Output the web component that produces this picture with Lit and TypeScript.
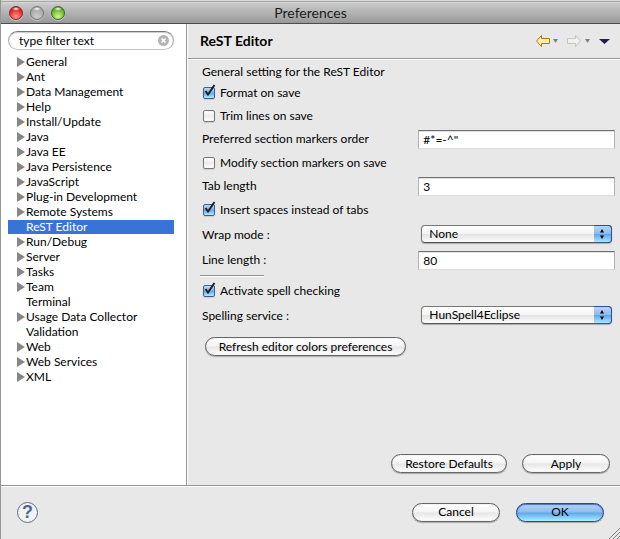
import { LitElement, html, css, svg } from "lit";
import { customElement, state } from "lit/decorators.js";
import { classMap } from "lit/directives/class-map.js";

interface Item {
  name: string;
  leaf?: boolean;
}

const ITEMS: Item[] = [
  { name: "General" },
  { name: "Ant" },
  { name: "Data Management" },
  { name: "Help" },
  { name: "Install/Update" },
  { name: "Java" },
  { name: "Java EE" },
  { name: "Java Persistence" },
  { name: "JavaScript" },
  { name: "Plug-in Development" },
  { name: "Remote Systems" },
  { name: "ReST Editor", leaf: true },
  { name: "Run/Debug" },
  { name: "Server" },
  { name: "Tasks" },
  { name: "Team" },
  { name: "Terminal", leaf: true },
  { name: "Usage Data Collector" },
  { name: "Validation", leaf: true },
  { name: "Web" },
  { name: "Web Services" },
  { name: "XML" },
];

const arrow = svg`<path d="M1.5 7 L6.5 1.5 V4.5 H14.5 V9.5 H6.5 V12.5 Z" />`;

@customElement("app-root")
export class AppRoot extends LitElement {
  static styles = css`
    :host {
      display: flex;
      flex-direction: column;
      min-height: 100vh;
      box-sizing: border-box;
      border-left: 1px solid #959595;
      background: #e8e8e8;
      color: #000;
      font: 12px/15px Lato, "Noto Sans", sans-serif;
    }
    * {
      box-sizing: border-box;
    }
    svg {
      display: block;
    }
    button,
    input,
    select {
      margin: 0;
      color: inherit;
      font: inherit;
    }
    .titlebar {
      display: grid;
      grid-template-columns: 1fr auto 1fr;
      align-items: center;
      height: 24px;
      border-top: 1px solid #d8d8d8;
      border-bottom: 1px solid #4c4c4c;
      background: linear-gradient(#a8a8a8 1px, #d8d8d8 1px, #c8c8c8 3px, #989898);
    }
    .titlebar h1 {
      margin: 0;
      font-size: 14px;
      font-weight: 400;
      color: #1c1c1c;
    }
    .lights {
      display: flex;
      gap: 7px;
      padding: 2px 0 0 8px;
    }
    .light {
      width: 14px;
      height: 14px;
      padding: 0;
      border: 1px solid #777;
      border-radius: 50%;
      background: radial-gradient(ellipse 4px 2px at 50% 15%, #fff, transparent),
        radial-gradient(circle at 50% 80%, #ccc, #aaa 65%, #888);
      box-shadow: 0 1px 0 #c8c8c8;
    }
    .close {
      border-color: #84302c;
      background: radial-gradient(ellipse 4px 2px at 50% 15%, #fff, transparent),
        radial-gradient(circle at 50% 80%, #ff9a90, #ee2828 60%, #8c0808);
    }
    .zoom {
      border-color: #3f6828;
      background: radial-gradient(ellipse 4px 2px at 50% 15%, #fff, transparent),
        radial-gradient(circle at 50% 80%, #d4f88c, #6cb834 60%, #2c6810);
    }
    .body {
      display: grid;
      grid-template-columns: minmax(186px, 30%) 1fr;
      flex: 1;
    }
    .side {
      padding: 7px 12px 7px 7px;
      border-right: 1px solid #959595;
      background: #fff;
    }
    .search {
      display: flex;
      align-items: center;
      height: 19px;
      padding: 0 4px 0 10px;
      border: 1px solid #aaa;
      border-top-color: #777;
      border-bottom-color: #c4c4c4;
      border-radius: 10px;
      background: #fff;
      box-shadow: inset 0 1px 1px #ccc;
    }
    .search input {
      flex: 1;
      min-width: 0;
      padding: 0;
      border: 0;
      outline: 0;
      background: none;
    }
    .search button {
      padding: 0;
      border: 0;
      background: none;
    }
    .tree {
      margin: 5px 0 0;
      padding: 0;
      list-style: none;
    }
    .tree li {
      display: flex;
      align-items: center;
      height: 15px;
      padding: 0 0 2px 9px;
    }
    .tree svg {
      width: 9px;
      flex: none;
      fill: #868686;
    }
    .leaf svg {
      visibility: hidden;
    }
    .tree .selected {
      background: linear-gradient(#3874d8, #3874d8) 0 0 / 100% 14px no-repeat;
      color: #fff;
    }
    .page {
      display: flex;
      flex-direction: column;
      border-left: 1px solid #fff;
    }
    .head {
      display: flex;
      align-items: center;
      justify-content: space-between;
      height: 35px;
      padding: 0 10px 0 12px;
      border-bottom: 1px solid #959595;
      box-shadow: 0 1px 0 #fff;
    }
    .head h2 {
      margin: 0;
      padding-bottom: 2px;
      font-size: 14px;
      font-weight: 700;
    }
    .nav {
      display: flex;
      align-items: center;
    }
    .nav button {
      display: flex;
      align-items: center;
      gap: 3px;
      height: 16px;
      padding: 0;
      margin-left: 9px;
      border: 0;
      background: none;
    }
    .back {
      fill: #fff0b0;
      stroke: #b87800;
    }
    .forward {
      fill: #f0f0ec;
      stroke: #c4c4c0;
    }
    .drop {
      fill: #808080;
    }
    .menu {
      fill: #201c50;
    }
    form {
      display: flex;
      flex: 1;
      flex-direction: column;
      gap: 5px;
      padding: 6px 5px 0 14px;
    }
    form p {
      margin: 0;
      line-height: 14px;
    }
    .check {
      display: flex;
      align-items: center;
      align-self: flex-start;
      gap: 5px;
      height: 18px;
    }
    .check-text {
      padding-bottom: 2px;
    }
    .box {
      position: relative;
      width: 13px;
      height: 12px;
      padding-left: 1px;
    }
    .box input {
      display: block;
      width: 12px;
      height: 12px;
      appearance: none;
      border: 1px solid #777;
      border-radius: 2px;
      background: linear-gradient(#fff, #ececec 50%, #fff);
      box-shadow: 0 1px 1px #ccc;
    }
    .box input:checked {
      border-color: #405c94;
      background: linear-gradient(#c0dcf8, #68acf0 55%, #b0f0ff);
    }
    .box svg {
      position: absolute;
      left: 1px;
      bottom: 1px;
      display: none;
      fill: none;
      stroke: #222;
      stroke-width: 2;
      pointer-events: none;
    }
    .box input:checked + svg {
      display: block;
    }
    .field {
      display: grid;
      grid-template-columns: 11fr 10fr;
      align-items: center;
      min-height: 19px;
    }
    .field label {
      padding-bottom: 2px;
    }
    .field input {
      width: 100%;
      height: 19px;
      padding: 0 4px 1px;
      border: 1px solid #b4b4b4;
      border-top-color: #707070;
      border-bottom-color: #dcdcdc;
      outline: 0;
      background: #fff;
      box-shadow: inset 0 1px 0 #e0e0e0;
    }
    .choice {
      min-height: 22px;
    }
    .pop {
      position: relative;
      margin: 0 3px 2px;
    }
    .pop select {
      display: block;
      width: 100%;
      height: 18px;
      padding: 0 24px 1px 7px;
      appearance: none;
      border: 1px solid #777;
      border-bottom-color: #555;
      border-radius: 4px;
      background: linear-gradient(#fff, #f4f4f4 48%, #e4e4e4 52%, #fcfcfc);
      box-shadow: 0 1px 1px #aaa;
    }
    .pop span {
      position: absolute;
      top: 0;
      right: 0;
      display: grid;
      place-items: center;
      width: 18px;
      height: 18px;
      border: 1px solid #2c4cac;
      border-left: 0;
      border-bottom-color: #3c5880;
      border-radius: 0 4px 4px 0;
      background: linear-gradient(#b8d4f4, #8cbcf0 48%, #60a4e8 52%, #a8e8ff);
      pointer-events: none;
    }
    .rule {
      width: 64px;
      height: 2px;
      margin: 0 0 0 -2px;
      border: 0;
      border-top: 1px solid #959595;
      border-bottom: 1px solid #fff;
    }
    .push {
      height: 19px;
      min-width: 88px;
      padding: 0 12px 1px;
      border: 1px solid #666;
      border-radius: 10px;
      background: linear-gradient(#fff, #f4f4f4 48%, #e6e6e6 52%, #fff);
      box-shadow: 0 1px 1px #aaa, inset 0 0 1px #999;
      line-height: 15px;
      white-space: nowrap;
    }
    .primary {
      border-color: #2c4880;
      background: linear-gradient(#b8d4f4, #8cbcf0 48%, #60a4e8 52%, #a8f0ff);
      box-shadow: 0 1px 1px #aaa, inset 0 1px 1px #4870c0;
    }
    .refresh {
      align-self: flex-start;
      width: 201px;
      margin: 5px 0 0 3px;
    }
    .actions {
      display: flex;
      justify-content: flex-end;
      gap: 15px;
      margin-top: auto;
      padding: 0 5px 12px 0;
    }
    .restore {
      width: 116px;
    }
    .foot {
      position: relative;
      display: flex;
      align-items: center;
      gap: 16px;
      height: 54px;
      padding: 0 16px 1px;
      border-top: 1px solid #959595;
      box-shadow: inset 0 1px 0 #fff;
    }
    .help {
      width: 21px;
      height: 21px;
      margin-right: auto;
      padding: 0;
      border: 1px solid #5a708c;
      border-radius: 50%;
      background: #f0f2f4;
      color: #50688c;
      font: 700 18px/18px "Liberation Sans", sans-serif;
    }
    .grip {
      position: absolute;
      right: 0;
      bottom: 0;
      stroke: #808080;
    }
  `;

  @state() private selected = "ReST Editor";

  private check(label: string, on = false) {
    return html`<label class="check">
      <span class="box">
        <input type="checkbox" .checked=${on} />
        <svg width="13" height="14" viewBox="0 0 13 14"><path d="M2.5 7 L5 10.5 L11.5 1" /></svg>
      </span>
      <span class="check-text">${label}</span>
    </label>`;
  }

  private field(id: string, label: string, value: string) {
    return html`<div class="field">
      <label for=${id}>${label}</label><input id=${id} type="text" .value=${value} />
    </div>`;
  }

  private choice(id: string, label: string, value: string) {
    return html`<div class="field choice">
      <label for=${id}>${label}</label>
      <div class="pop">
        <select id=${id}><option>${value}</option></select>
        <span>
          <svg width="6" height="12" viewBox="0 0 6 12">
            <path d="M3 1 L5 4.5 H1 Z M3 11 L5 7.5 H1 Z" />
          </svg>
        </span>
      </div>
    </div>`;
  }

  private drop() {
    return html`<svg class="drop" width="5" height="4" viewBox="0 0 5 4"><path d="M0 0 H5 L2.5 4 Z" /></svg>`;
  }

  render() {
    return html`
      <header class="titlebar">
        <div class="lights">
          <button class="light close" aria-label="Close"></button>
          <button class="light" aria-label="Minimize"></button>
          <button class="light zoom" aria-label="Zoom"></button>
        </div>
        <h1>Preferences</h1>
      </header>
      <div class="body">
        <nav class="side">
          <div class="search">
            <input type="text" aria-label="Filter" value="type filter text" />
            <button aria-label="Clear">
              <svg width="11" height="11" viewBox="0 0 11 11">
                <circle cx="5.5" cy="5.5" r="5.5" fill="#b4b4b4" />
                <path d="M3.5 3.5 L7.5 7.5 M7.5 3.5 L3.5 7.5" stroke="#fff" stroke-width="1.6" />
              </svg>
            </button>
          </div>
          <ul class="tree">
            ${ITEMS.map(
              (item) => html`<li
                class=${classMap({ leaf: !!item.leaf, selected: item.name === this.selected })}
                @click=${() => (this.selected = item.name)}
              >
                <svg width="9" height="10" viewBox="0 0 9 10"><path d="M0 0 L8 5 L0 10 Z" /></svg>
                ${item.name}
              </li>`
            )}
          </ul>
        </nav>
        <main class="page">
          <div class="head">
            <h2>ReST Editor</h2>
            <div class="nav">
              <button aria-label="Back">
                <svg class="back" width="15" height="14" viewBox="0 0 15 14">${arrow}</svg>
                ${this.drop()}
              </button>
              <button aria-label="Forward">
                <svg class="forward" width="15" height="14" viewBox="0 0 15 14">
                  <g transform="matrix(-1 0 0 1 15 0)">${arrow}</g>
                </svg>
                ${this.drop()}
              </button>
              <button aria-label="Menu">
                <svg class="menu" width="11" height="5" viewBox="0 0 11 5"><path d="M0 0 H11 L5.5 5 Z" /></svg>
              </button>
            </div>
          </div>
          <form @submit=${(e: Event) => e.preventDefault()}>
            <p>General setting for the ReST Editor</p>
            ${this.check("Format on save", true)} ${this.check("Trim lines on save")}
            ${this.field("order", "Preferred section markers order", '#*=-^"')}
            ${this.check("Modify section markers on save")} ${this.field("tab", "Tab length", "3")}
            ${this.check("Insert spaces instead of tabs", true)} ${this.choice("wrap", "Wrap mode :", "None")}
            ${this.field("line", "Line length :", "80")}
            <hr class="rule" />
            ${this.check("Activate spell checking", true)}
            ${this.choice("spelling", "Spelling service :", "HunSpell4Eclipse")}
            <button class="push refresh">Refresh editor colors preferences</button>
            <div class="actions">
              <button class="push restore">Restore Defaults</button>
              <button class="push">Apply</button>
            </div>
          </form>
        </main>
      </div>
      <footer class="foot">
        <button class="help" aria-label="Help">?</button>
        <button class="push">Cancel</button>
        <button class="push primary">OK</button>
        <svg class="grip" width="12" height="12" viewBox="0 0 12 12">
          <path d="M1 12 L12 1 M5 12 L12 5 M9 12 L12 9" />
        </svg>
      </footer>
    `;
  }
}
